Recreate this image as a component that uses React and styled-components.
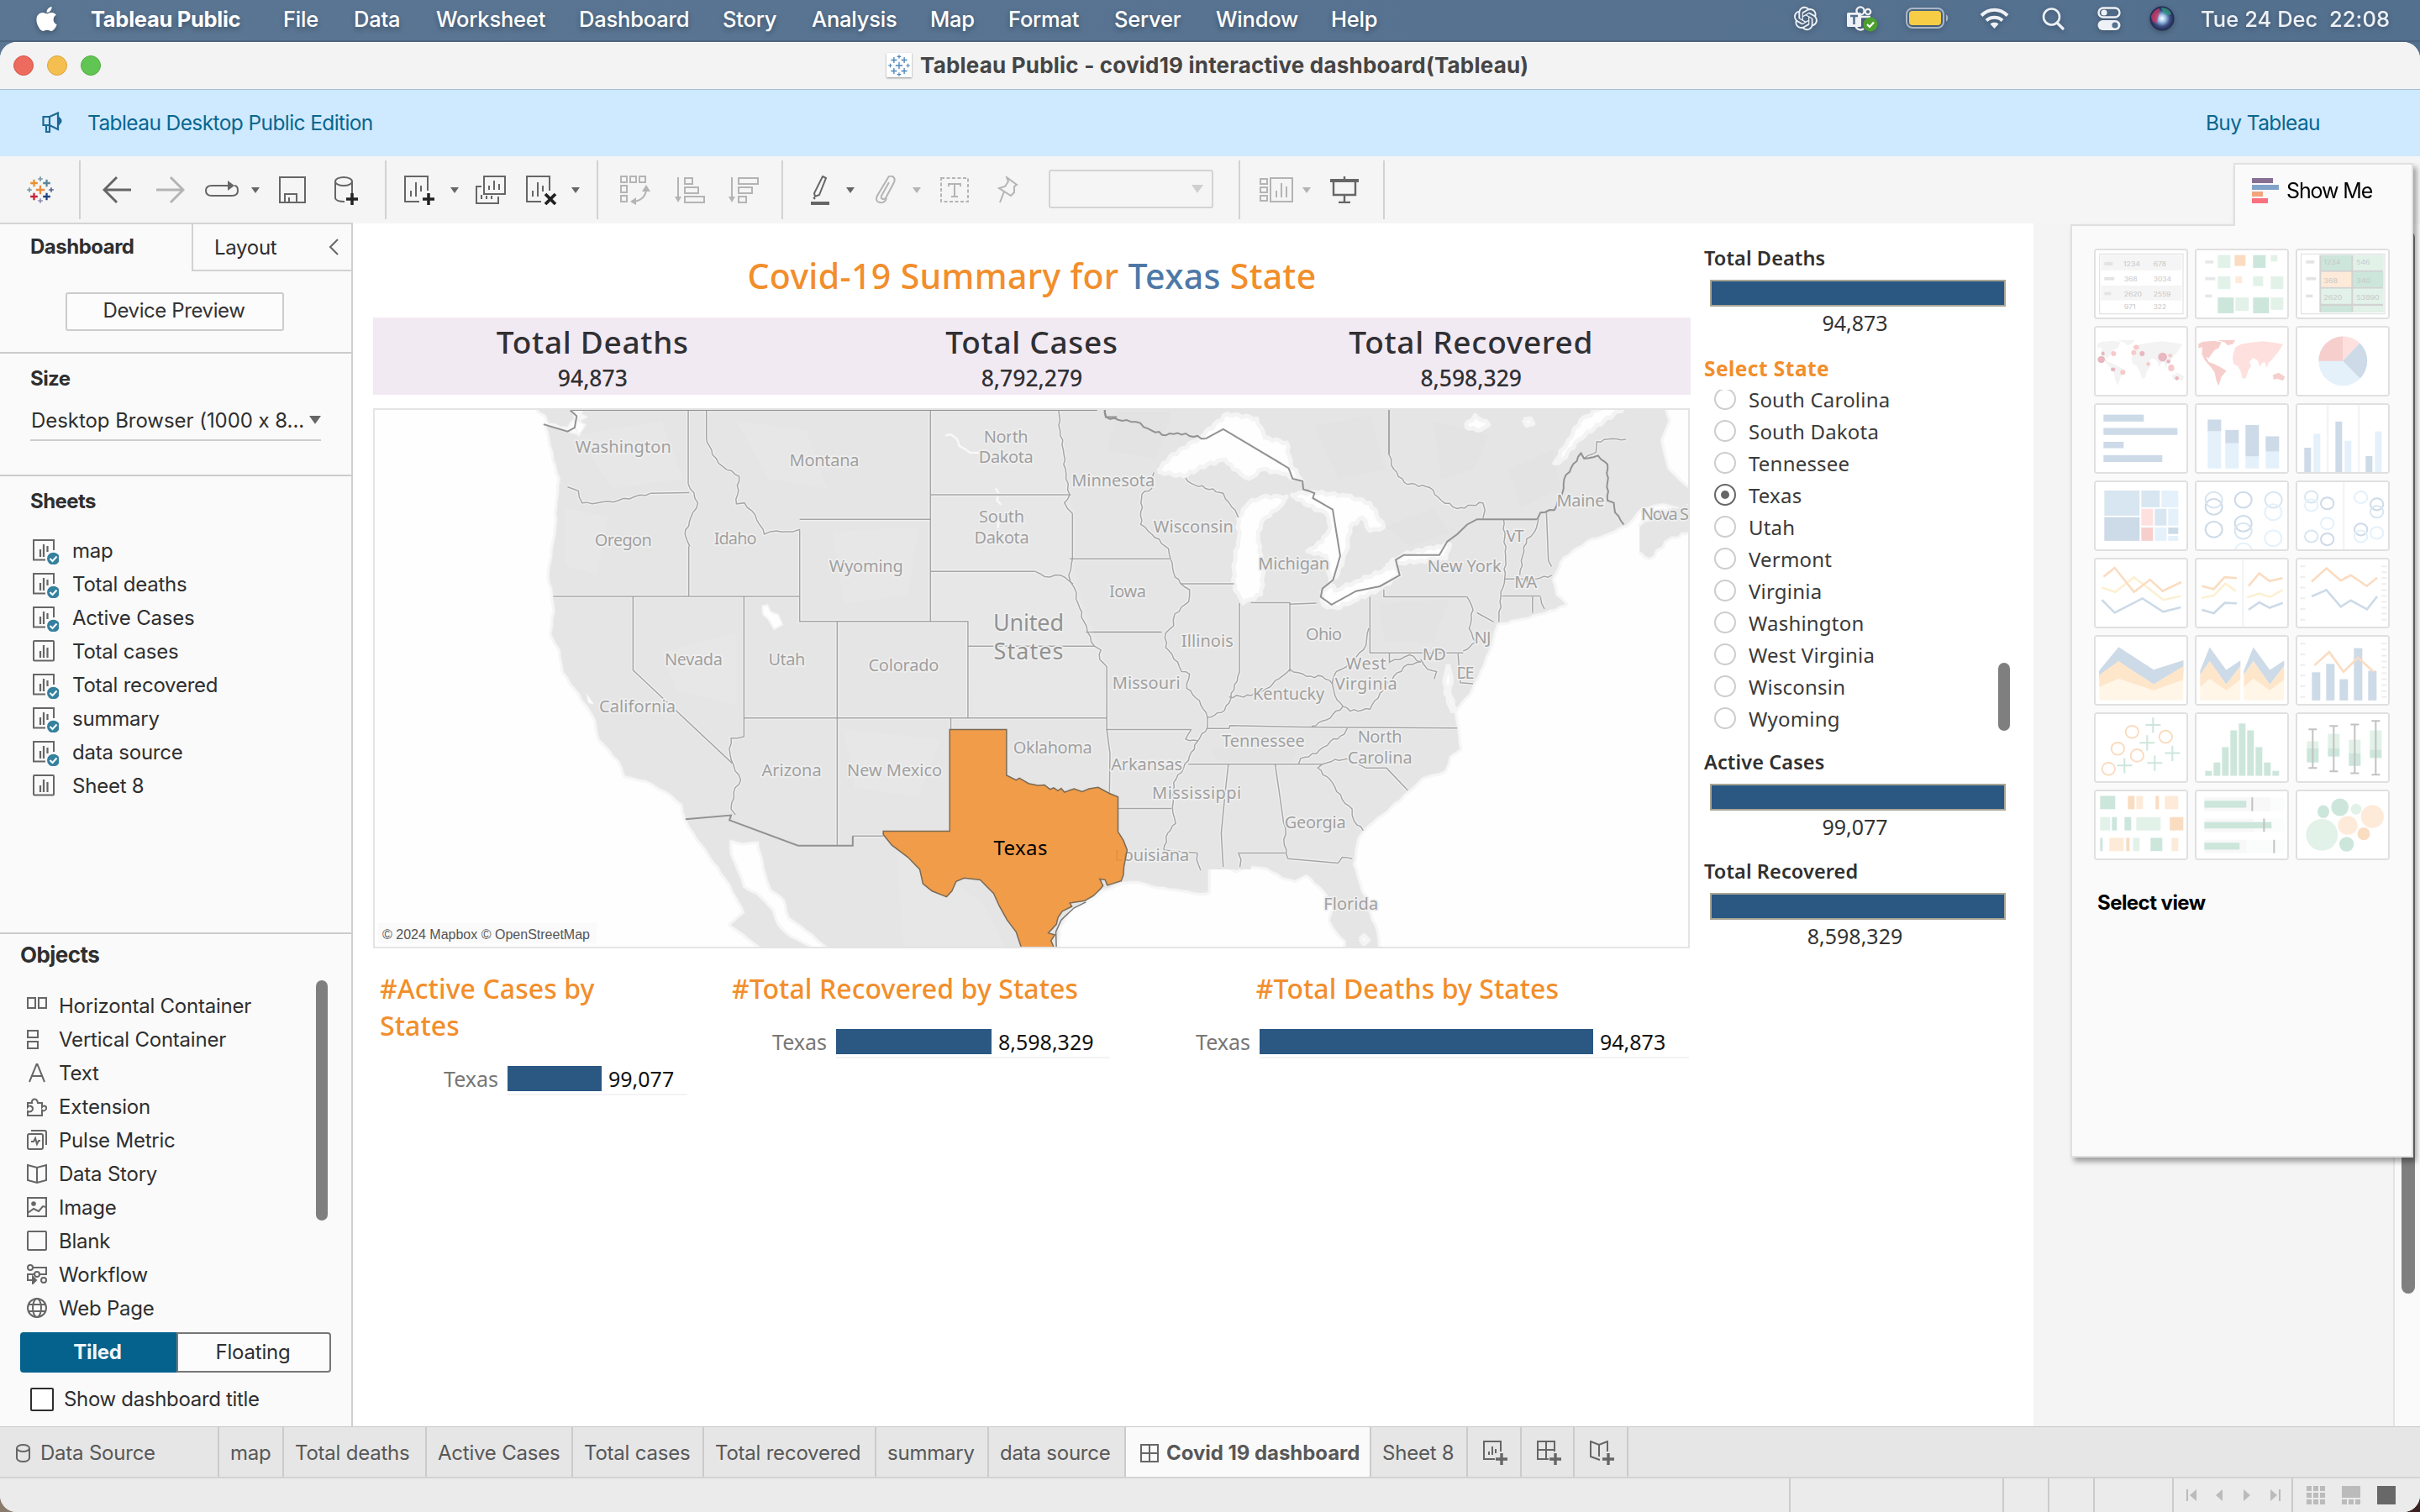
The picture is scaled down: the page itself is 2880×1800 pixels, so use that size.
import React from "react";
import styled, { createGlobalStyle, css } from "styled-components";
import { FaApple } from "react-icons/fa";
import { RiOpenaiFill } from "react-icons/ri";

const ui = `Inter, "Liberation Sans", sans-serif`;
const viz = `"Noto Sans", "Open Sans", sans-serif`;
const orange = "#f28e2b";
const navy = "#2b5783";

const Global = createGlobalStyle`
  * { box-sizing: border-box; }
  body { margin: 0; overflow: hidden; }
  svg { display: block; flex: none; }
`;

/* ---------- frame ---------- */
const Desktop = styled.div`
  width: 2880px; height: 1800px; display: flex; flex-direction: column;
  font-family: ${ui}; color: #333; white-space: nowrap;
  background: linear-gradient(90deg, #5b7693 0, #53708f 100%) 0 0 / 100% 900px no-repeat,
    linear-gradient(90deg, #8a7c6c 0, #8a7c6c 50%, #3b2222 50%);
`;
const MenuBar = styled.header`
  height: 50px; display: flex; align-items: center; justify-content: space-between;
  padding: 0 36px 4px 39px; color: #fff; border-bottom: 2px solid #4b647f;
`;
const Menus = styled.nav`display: flex; align-items: center;`;
const MenuItem = styled.span`
  width: ${(p) => p.$w}px; font-size: 25.5px; letter-spacing: ${(p) => p.$ls ?? -0.2}px;
  font-weight: ${(p) => (p.$bold ? 700 : 500)}; text-shadow: 0 3px 6px rgba(0, 0, 0, 0.3);
`;
const AppleSlot = styled.span`width: 69px; display: flex; filter: drop-shadow(0 2px 3px rgba(0, 0, 0, 0.3));`;
const Tray = styled.div`
  display: flex; align-items: center; color: #eef1f5;
  filter: drop-shadow(0 2px 3px rgba(0, 0, 0, 0.25));
`;
const TraySlot = styled.span`width: ${(p) => p.$w}px; display: flex;`;
const Clock = styled.span`font-size: 25.5px; font-weight: 500; letter-spacing: 0.05px; white-space: pre;`;

const Window = styled.div`
  height: 1750px; display: flex; flex-direction: column; overflow: hidden;
  border-radius: 20px; background: #f4f4f4; position: relative;
`;
const TitleBar = styled.div`
  height: 57px; background: #f3f3f3; border-bottom: 1.5px solid #a3bfd6; border-top: 1px solid #fff;
  display: grid; grid-template-columns: 1055px 1fr; align-items: center; padding-bottom: 2px;
`;
const Lights = styled.div`display: flex; gap: 16px; padding-left: 16px;`;
const Light = styled.i`
  width: 24px; height: 24px; border-radius: 50%; background: ${(p) => p.$c}; border: 1px solid ${(p) => p.$b};
`;
const TitleText = styled.div`
  display: flex; align-items: center; gap: 10px; font-weight: 700; font-size: 26px; color: #454545;
  letter-spacing: 0.2px;
`;
const DocIcon = styled.span`
  width: 30px; height: 29px; background: #fff; box-shadow: 0 1px 2px rgba(0, 0, 0, 0.4);
  display: grid; place-items: center;
`;
const Banner = styled.div`
  height: 79px; background: #cfe9ff; color: #06678f; display: flex; align-items: center;
  justify-content: space-between; padding: 0 119px 2px 50px; font-size: 24.5px; letter-spacing: -0.6px;
`;
const BannerLeft = styled.span`display: flex; align-items: center; gap: 29px;`;

/* ---------- toolbar ---------- */
const Toolbar = styled.div`height: 80px; background: #f5f5f5; display: flex; align-items: center;`;
const Slot = styled.span`margin-left: ${(p) => p.$ml}px; width: ${(p) => p.$w}px; display: flex; justify-content: center;`;
const Sep = styled.i`margin-left: ${(p) => p.$ml}px; width: 2px; height: 70px; background: #d2d2d2;`;
const Combo = styled.span`
  margin-left: 35px; width: 196px; height: 46px; border: 2px solid #d3d3d3; border-radius: 3px;
  display: flex; align-items: center; justify-content: flex-end; padding-right: 10px; margin-top: -2px;
`;

/* ---------- body ---------- */
const Body = styled.div`height: 1432px; display: flex;`;
const Side = styled.aside`
  width: 420px; background: #fafafa; border-right: 2px solid #d0d0d0; border-top: 2px solid #d4d4d4;
  display: flex; flex-direction: column; color: #2f2f2f; font-size: 24px; letter-spacing: -0.22px;
  margin-top: -1px; height: 1433px;
`;
const SideTabs = styled.div`height: 56px; display: grid; grid-template-columns: 228px 1fr;`;
const SideTab = styled.div`
  display: flex; align-items: center; padding: ${(p) => (p.$on ? "0 0 3px 36px" : "0 0 0 25px")};
  font-weight: ${(p) => (p.$on ? 700 : 400)}; letter-spacing: ${(p) => (p.$on ? -0.5 : -0.3)}px;
  ${(p) => !p.$on && css`border-left: 2px solid #d2d2d2; border-bottom: 2px solid #d2d2d2; justify-content: space-between; padding-right: 15px;`}
`;
const PreviewBox = styled.div`height: 98px; display: flex; padding: 25px 0 0 78px; border-bottom: 2px solid #ccc;`;
const PreviewButton = styled.button`
  width: 260px; height: 46px; border: 2px solid #ccc; border-radius: 3px; background: #fcfcfc;
  font: 400 24px ${ui}; letter-spacing: -0.4px; color: #333; padding: 0 2px 3px 0;
`;
const Heading = styled.h3`
  margin: 0; font-size: ${(p) => p.$fs || 24}px; font-weight: 700; letter-spacing: -0.55px; line-height: 30px;
`;
const SizeBox = styled.div`height: 146px; padding: 15px 0 0 36px; border-bottom: 2px solid #ccc;`;
const SizeSelect = styled.div`
  margin: 17px 0 0 0; width: 346px; height: 42px; border-bottom: 2px solid #ccc; padding: 0 0 6px 1px;
  display: flex; align-items: center; justify-content: space-between; font-size: 24px; letter-spacing: -0.05px;
`;
const SheetsBox = styled.div`height: 545px; padding: 15px 0 0 36px; border-bottom: 2px solid #ccc;`;
const SheetList = styled.div`margin-top: 23px;`;
const Row = styled.div`height: 40px; display: flex; align-items: center; gap: ${(p) => p.$gap}px;`;
const ObjectsBox = styled.div`flex: 1; padding: 10px 24px 0 24px;`;
const ObjectScroll = styled.div`display: flex; justify-content: space-between; margin-top: 15px; padding-right: 4px;`;
const ObjectList = styled.div`padding-left: 8px; margin-top: 10px;`;
const Thumb = styled.i`
  width: 14px; height: ${(p) => p.$h}px; border-radius: 7px; background: #7f7f7f; margin-top: ${(p) => p.$mt || 0}px;
`;
const Toggle = styled.div`
  margin-top: 9px; width: 370px; height: 48px; display: grid; grid-template-columns: 186px 1fr;
`;
const ToggleHalf = styled.div`
  display: grid; place-items: center; padding: 0 2px 2px 0;
  ${(p) => p.$on
    ? css`background: #05628c; color: #f0f7fb; font-weight: 700; border-radius: 4px 0 0 4px;`
    : css`background: #fcfcfc; border: 2px solid #767676; border-radius: 0 4px 4px 0;`}
`;
const CheckRow = styled.label`display: flex; align-items: center; gap: 12px; margin: 17px 0 0 12px; letter-spacing: -0.32px;`;
const Check = styled.i`width: 28px; height: 28px; border: 2px solid #2e2e2e; border-radius: 2px; background: #fff;`;

/* ---------- dashboard ---------- */
const Canvas = styled.main`
  width: 2000px; background: #fff; padding-left: 24px; display: grid; grid-template-columns: 1568px 1fr;
  column-gap: 16px; font-family: ${viz};
`;
const Title = styled.h1`
  margin: 0; height: 112px; padding-top: 12px; display: flex; align-items: center; justify-content: center;
  font-size: 41px; font-weight: 500; color: ${orange}; white-space: pre; letter-spacing: 0.35px;
  b { font-weight: 500; color: #4e79a7; }
`;
const Band = styled.section`height: 92px; background: #f2eaf3; display: grid; grid-template-columns: repeat(3, 1fr);`;
const Kpi = styled.div`text-align: center; color: #303033; font-weight: 500;`;
const KpiName = styled.div`font-size: 37px; line-height: 44px; padding-top: 7px; letter-spacing: 0.7px;`;
const KpiValue = styled.div`font-size: 26.5px; line-height: 30px; margin-top: 6px;`;
const MapFrame = styled.section`margin-top: 16px; height: 643px; width: 1567px;`;
const Charts = styled.section`display: grid; grid-template-columns: 372px 522px 674px; padding-top: 26px;`;
const ChartTitle = styled.h2`
  margin: 0 0 26px; font-size: 32px; line-height: 44px; font-weight: 500; color: ${orange};
  white-space: pre; ${(p) => (p.$left ? "padding-left: 8px;" : "text-align: center;")}
  letter-spacing: 0.08px;
`;
const ChartRow = styled.div`display: grid; grid-template-columns: ${(p) => p.$label}px 1fr; align-items: start;`;
const ChartLabel = styled.span`text-align: right; padding-right: 11px; color: #777; font-size: 25px; line-height: 31px;`;
const Plot = styled.div`
  width: ${(p) => p.$w}px; height: 35px; border-bottom: 2px solid #f3f3f3; display: flex;
  gap: 8px; color: #111; font-size: 25px; line-height: 31px;
`;
const Bar = styled.i`width: ${(p) => p.$w}px; height: 30px; background: ${navy};`;

const Panel = styled.section`padding-top: 27px; color: #333; font-size: 24px;`;
const WidgetBlock = styled.div`margin-top: ${(p) => p.$mt || 0}px; height: 107px;`;
const WidgetTitle = styled.h3`
  margin: 0; font-size: ${(p) => (p.$accent ? 24.5 : 23.5)}px; line-height: ${(p) => (p.$accent ? 30 : 28)}px;
  padding-bottom: ${(p) => (p.$accent ? 0 : 2)}px; letter-spacing: ${(p) => (p.$accent ? 0.45 : 0.1)}px;
  font-weight: ${(p) => (p.$accent ? 700 : 600)}; color: ${(p) => (p.$accent ? orange : "#303030")};
`;
const FullBar = styled.div`
  margin: 10px 0 0 7px; width: 352px; height: 32px; background: ${navy}; border: 2px solid #a9a695;
`;
const WidgetValue = styled.div`margin: 4px 0 0 7px; width: 345px; text-align: center; font-size: 25px; line-height: 30px;`;
const StateBox = styled.div`margin-top: 24px; height: 469px; display: flex; flex-direction: column;`;
const StateScroll = styled.div`margin-top: 10px; height: 421px; display: flex; justify-content: space-between; padding-right: 28px;`;
const States = styled.div`margin: -8px 0 0 12px;`;
const StateRow = styled.div`
  height: 38px; display: flex; align-items: center; gap: 15px; font-size: 24px; color: #3a3a3a; letter-spacing: 0.2px;
  &:first-child i { clip-path: inset(2px 0 0 0); }
`;
const Radio = styled.i`
  width: 26px; height: 26px; border-radius: 50%; border: 2px solid ${(p) => (p.$on ? "#666" : "#cdcdcd")};
  display: grid; place-items: center;
  ${(p) => p.$on && css`&::after { content: ""; width: 10px; height: 10px; border-radius: 50%; background: #666; }`}
`;

const Gutter = styled.div`flex: 1; background: #f4f4f4;`;
const Track = styled.div`
  width: 32px; border-left: 2px solid #e4e4e4; background: #fafafa; padding: 9px 0 0 8px;
  i { display: block; width: 16px; height: 1265px; border-radius: 8px; background: #7f7f7f; }
`;

/* ---------- show me palette, floats over the canvas ---------- */
const ShowMe = styled.div`
  position: absolute; left: 2464px; top: 144px; width: 408px; filter: drop-shadow(4px 5px 3px rgba(0, 0, 0, 0.35));
  display: flex; flex-direction: column; align-items: flex-end; color: #000;
`;
const ShowTab = styled.div`
  width: 214px; height: 75px; background: #fafafa; border: 2px solid #e0e0e0; border-bottom: 0;
  display: flex; align-items: center; gap: 9px; padding: 0 0 12px 20px; font-size: 25px; margin-bottom: -2px;
  position: relative; z-index: 1; letter-spacing: -1.1px;
`;
const ShowBody = styled.div`
  width: 408px; height: 1111px; background: #fafafa; border: 2px solid #e0e0e0; padding: 27px 26px 0;
`;
const ThumbGrid = styled.div`display: grid; grid-template-columns: repeat(3, 112px); gap: 8px;`;
const Cell = styled.div`
  height: 84px; background: #fff; border-radius: 3px; overflow: hidden; display: grid;
  svg, &::after { grid-area: 1 / 1; }
  &::after { content: ""; border: 2px solid #e0e0e0; border-radius: 3px; }
`;
const SelectView = styled.div`margin: 36px 0 0 4px; font-size: 24px; font-weight: 700; letter-spacing: -0.55px; line-height: 30px;`;

/* ---------- bottom ---------- */
const Tabs = styled.div`
  height: 62px; background: #e6e6e6; border-top: 1.5px solid #c8c8c8; border-bottom: 2px solid #d3d3d3; display: flex;
`;
const Tab = styled.div`
  width: ${(p) => p.$w}px; border-right: 2px solid #cbcbcb; display: flex; align-items: center; gap: ${(p) => p.$gap || 9}px;
  padding-left: ${(p) => p.$pl ?? 13}px; font-size: 24px; color: #585858; letter-spacing: ${(p) => (p.$on ? -0.05 : -0.22)}px;
  padding-top: 2px; ${(p) => p.$on && "background: #fafafa; font-weight: 700;"}
`;
const Status = styled.div`flex: 1; background: #ebebeb; display: flex; justify-content: flex-end;`;
const StatusCell = styled.div`
  width: ${(p) => p.$w}px; border-left: 2px solid #cbcbcb; display: flex; align-items: center;
  gap: ${(p) => p.$gap || 0}px; padding-left: ${(p) => p.$pl || 0}px;
`;

/* ---------- icon helpers ---------- */
const Ico = ({ w = 32, h = w, vb, c = "#666", sw = 2, fill = "none", children }) => (
  <svg width={w} height={h} viewBox={vb || `0 0 ${w} ${h}`} fill={fill} stroke={c} strokeWidth={sw}>{children}</svg>
);
const Caret = ({ c = "#666", w = 10 }) => (
  <svg width={w} height={w * 0.7} viewBox="0 0 10 7"><path d="M0 0h10L5 7z" fill={c} /></svg>
);
const Plus = ({ x, y, r, c, s = 2.4 }) => <path d={`M${x - r} ${y}h${2 * r}M${x} ${y - r}v${2 * r}`} stroke={c} strokeWidth={s} />;
const Logo = ({ mono, size = 32 }) => {
  const k = (c) => (mono ? "#4a84ba" : c);
  const s = mono ? 1.7 : 2.4;
  const t = mono ? 1.5 : 1.8;
  return (
    <svg width={size} height={size} viewBox="0 0 34 34">
      <Plus x={17} y={17} r={5.5} c={k("#eb8a3c")} s={s} /><Plus x={9} y={8.5} r={4.6} c={k("#e8912d")} s={s} />
      <Plus x={25} y={8.5} r={4.6} c={k("#5b879b")} s={s} /><Plus x={9} y={25.5} r={4.6} c={k("#c72037")} s={s} />
      <Plus x={25} y={25.5} r={4.6} c={k("#1f447e")} s={s} /><Plus x={17} y={3.2} r={3} c={k("#7099a6")} s={t} />
      <Plus x={17} y={30.8} r={3} c={k("#8d8eb5")} s={t} /><Plus x={3.2} y={17} r={3} c={k("#7099a6")} s={t} />
      <Plus x={30.8} y={17} r={3} c={k("#59619b")} s={t} />
    </svg>
  );
};

const SheetIcon = ({ used }) => (
  <Ico w={34} h={34}>
    {used ? <path d="M18 28.5H4V5h24v12" /> : <rect x="4" y="5" width="24" height="23.5" rx="1" />}
    <path d={used ? "M12 25v-9M16 25V10M20.5 19v-7" : "M12 25v-8M16 25V10M20.5 25V13"} strokeWidth="2.2" />
    {used ? <circle cx="27.5" cy="28" r="9" fill="#fafafa" stroke="none" /> : null}
    {used ? <ellipse cx="27.5" cy="27" rx="7.5" ry="7.3" fill="#35809f" stroke="none" /> : null}
    {used ? <path d="M23.5 27l3 3 5-5.5" stroke="#fff" /> : null}
  </Ico>
);

const objectIcons = {
  "Horizontal Container": <path d="M1 3h9v12H1zM14 3h9v12h-9z" />,
  "Vertical Container": <path d="M1 2h12v8H1zM1 15h12v8H1z" />,
  Text: <path d="M3 23L11.5 2h1L21 23M6 16h12" />,
  Extension: <path d="M1 11v-3h5c-1-5 6-7 7 0h5v5c2-3 6-1 5 2s-4 3-5 1v7H1v-5c3 1 6 0 6-3S3 10 1 13z" />,
  "Pulse Metric": <g><rect x="1" y="5" width="18" height="18" rx="2" /><path d="M5 1h16q2 0 2 2v15M5 14h3l2-4 2 7 2-4h2" /></g>,
  "Data Story": <path d="M1 2l11 3 11-3v18l-11 3-11-3zM12 5v18" />,
  Image: <g><rect x="1" y="1" width="22" height="22" /><path d="M1 19l7-5 6 3 5-6 4 1" /><circle cx="8" cy="8" r="1.8" fill="#666" /></g>,
  Blank: <rect x="1" y="1" width="22" height="22" rx="1" />,
  Workflow: <g><circle cx="4" cy="4" r="3" /><circle cx="12" cy="12" r="3" /><circle cx="20" cy="19" r="3" /><path d="M7 4h16v8h-8M9 12H1v7h6" /><path d="M7 15l4 4-4 4z" fill="#666" /></g>,
  "Web Page": <g><circle cx="12" cy="12" r="11" /><ellipse cx="12" cy="12" rx="5" ry="11" /><path d="M2 8h20M2 16h20" /></g>,
};

const Worksheet = () => <path d="M19 32H2V2h27v17M9 26v-7M15 26V9M21 20v-7" />;

/* ---------- map ---------- */
const wiggle = (pts, amp = 3, step = 9) => {
  const p = pts.trim().split(/\s+/).map((s) => s.split(",").map(Number));
  const out = [p[0]];
  for (let i = 1; i < p.length; i++) {
    const [x0, y0] = p[i - 1];
    const [x1, y1] = p[i];
    const len = Math.hypot(x1 - x0, y1 - y0);
    const n = Math.floor(len / step);
    for (let k = 1; k < n; k++) {
      const t = k / n;
      const d = Math.sin(x0 * 12.9 + y1 * 7.7 + k * 4.1) * amp;
      out.push([x0 + (x1 - x0) * t - ((y1 - y0) / len) * d, y0 + (y1 - y0) * t + ((x1 - x0) / len) * d]);
    }
    out.push([x1, y1]);
  }
  return "M" + out.map(([x, y]) => `${x.toFixed(1)} ${y.toFixed(1)}`).join("L");
};

/* The country is drawn on two sheets, each in its own units. */
const WEST = "translate(430 260) scale(0.63776 0.574)";
const EAST = "translate(1300 260) scale(0.47194 0.574)";
const westX = (x) => 430 + x * 0.63776;
const eastX = (x) => 1300 + x * 0.47194;
const mapY = (y) => 260 + y * 0.574;

const westLand = "345,428 352,455 360,500 372,540 367,585 364,640 357,700 351,740 358,780 362,815 355,862 372,895 378,940 400,975 422,1010 438,1040 445,1080 482,1125 492,1155 532,1165 568,1187 600,1215 606,1245 622,1275 650,1320 682,1370 702,1410 716,1440 690,1465 712,1482 747,1512 747,1530 836,1530 836,1512 800,1492 776,1466 766,1436 736,1402 712,1388 700,1352 688,1320 687,1288 712,1295 742,1292 752,1345 766,1392 790,1412 800,1450 832,1476 872,1512 880,1530 1297,1530 1300,1470 1325,1430 1352,1415 1382,1392 1420,1376 1450,1374 1482,1385 1522,1390 1580,1396";
const eastLand = "60,1374 130,1368 165,1385 215,1390 250,1396 288,1398 262,1375 264,1350 290,1346 340,1342 362,1352 390,1343 440,1346 480,1366 512,1372 540,1360 575,1385 597,1408 612,1430 600,1455 618,1480 640,1498 636,1530 724,1530 716,1480 692,1430 672,1380 656,1340 668,1285 695,1258 730,1235 795,1188 830,1160 888,1145 900,1115 926,1100 920,1060 912,1022 925,1008 950,985 962,962 985,925 1005,882 1012,858 1020,840 1085,828 1140,816 1192,800 1168,782 1158,748 1186,702 1245,668 1300,652 1345,636 1385,600 1440,590 1490,600 1510,585";

const westStraight = [
  "M610 397V550M611 680V784M644 397V455M818 645V836H1062V397M818 624H1062M358 784H818M540 570L612 569",
  "M1062 836H1132V1036M714 1036H1391M714 784V1075M507 784V937L692 1130M888 836V1301M1132 887H1368",
  "M917 1281H974M1100 1036V1060M1062 573H1324M1062 732H1257M1322 706H1508M1352 858H1492M1391 930V1060H1548",
  "M1391 1060L1397 1110 1396 1195M1412 1224H1512M1327 612V706",
];
const westRiver = [
  "610,550 628,590 615,620 604,655 613,680", "644,455 655,490 675,515 705,535 700,592 715,590 735,615 752,655 775,648 805,650 818,645",
  "385,557 405,565 412,590 440,590 480,585 540,570", "714,1075 690,1078 688,1110 695,1135 708,1165 695,1190 690,1225 698,1237",
  "1257,732 1275,743 1305,740 1328,758", "1301,397 1304,440 1310,480 1315,540 1322,573 1312,590 1327,612",
  "1327,706 1320,740 1330,765 1338,800 1348,835 1355,858 1368,887 1380,895 1378,915 1391,930",
];
const eastStraight = [
  "M222 758H357M371 798V930M400 797H498V940M498 800L565 798M700 785V901H935M735 770V785H945M749 901V922",
  "M290 1058H345L347 1052 530 1055 920 1057M242 1132H580M650 1123L690 1140H742L795 1186M461 1132L480 1240",
  "M343 1132L335 1190 325 1275 330 1345M487 1316H368M493 1328L620 1337M1040 748H1120M1033 783H1130M1110 785V818",
  "M1145 610L1150 710 1158 722M922 903L928 963 960 965M180 1310L265 1316M970 818L1012 837M0 858H175",
];
const eastRiver = [
  "155,527 150,560 125,572 122,635 150,655 192,685 197,706 205,735 222,757 245,770 243,795 208,820 205,845 185,860 185,890 215,920 225,940 245,945 238,975 270,1000 290,1035 290,1055 265,1085 245,1115 230,1140 205,1170 202,1220 210,1255 190,1275 180,1310",
  "250,1060 235,1080 265,1083", "235,538 250,550 330,570 345,590 360,605 368,620", "371,930 365,960 350,985 345,1005 325,1025 290,1035",
  "345,992 400,990 440,975 470,955 498,935 540,950 580,950 605,965 615,940 640,930 665,910 690,885 697,850",
  "945,785 960,812 950,850 968,880 935,897", "605,965 612,990 632,1012 650,1022 700,1018 725,985 760,950 795,925 828,920 800,905 775,915 750,920",
  "828,915 845,935 868,940 862,955", "632,1012 590,1040 553,1053", "643,1057 635,1070 600,1085 565,1110 525,1120 520,1132", "568,1140 580,1132 612,1122 650,1123",
  "568,1140 605,1170 630,1205 655,1225 660,1250 683,1270", "480,1240 487,1265 484,1300 493,1328", "368,1316 375,1330 372,1345", "620,1337 630,1325 655,1328",
  "265,1316 263,1330 273,1352", "1037,624 1042,700 1040,745 1030,785 1025,837", "1125,624 1115,650 1095,665 1085,700 1078,740",
  "1120,748 1158,740", "1130,785 1140,810", "748,490 760,520 787,548 850,558 880,585 920,602 985,590 990,605 985,622", "1240,498 1270,485 1272,463 1310,457 1345,458",
];
const lakes = [
  "165,525 195,495 270,455 340,405 415,415 435,455 490,465 500,510 530,545 480,530 430,520 395,540 355,520 335,500 290,510 230,535 165,525",
  "368,620 395,590 430,577 490,577 470,600 430,625 418,650 421,690 432,730 425,780 380,798 359,770 356,720 370,660 368,620",
  "500,572 560,568 640,575 700,590 735,640 700,648 680,620 650,640 640,690 620,735 600,755 590,700 542,690 580,670 600,640 590,612 545,596 500,572",
  "577,772 608,762 612,772 660,755 758,722 775,740 720,770 660,793 615,808 583,802 577,772",
  "740,720 785,697 870,680 902,676 892,705 830,710 780,715 740,720",
  "1290,388 1230,420 1200,460 1165,508 1185,500 1225,460 1290,420 1350,388 1290,388",
  "897,925 905,950 900,985 916,1018 908,1022 890,985 890,950 897,925",
  "940,430 965,408 1000,428 970,440 940,430", "1087,418 1105,415 1112,426 1095,430 1087,418",
  "675,1495 685,1487 697,1497 685,1505 675,1495",
];
const texas = "974,1271 1098,1271 1098,1060 1204,1060 1204,1155 1222,1165 1228,1161 1245,1172 1262,1176 1275,1175 1285,1184 1292,1181 1300,1187 1306,1182 1312,1190 1330,1183 1345,1189 1358,1183 1375,1180 1395,1192 1412,1200 1412,1272 1422,1290 1429,1310 1423,1345 1422,1362 1418,1374 1392,1383 1388,1372 1378,1370 1384,1384 1378,1392 1366,1405 1350,1415 1322,1420 1326,1427 1308,1437 1300,1450 1297,1464 1282,1482 1294,1486 1287,1498 1293,1514 1232,1514 1222,1480 1205,1455 1190,1425 1180,1400 1155,1372 1125,1368 1110,1375 1102,1395 1092,1407 1065,1395 1048,1380 1042,1350 1020,1325 990,1300 974,1278";

const labels = [
  ["Washington", westX(489), 486, 114], ["Oregon", westX(489), 680, 68], ["Idaho", westX(698), 676, 51], ["Montana", westX(864), 514, 83],
  ["Wyoming", westX(942), 733, 88], ["North", westX(1203), 465, 53], ["Dakota", westX(1203), 507, 65], ["South", westX(1195), 631, 54],
  ["Dakota", westX(1195), 674, 65], ["Minnesota", westX(1403), 556, 99], ["Iowa", westX(1430), 786, 44], ["Nevada", westX(620), 926, 69],
  ["Utah", westX(794), 926, 44], ["Colorado", westX(1012), 939, 84], ["California", westX(515), 1025, 91], ["Arizona", westX(803), 1157, 71],
  ["New Mexico", westX(995), 1157, 113], ["Oklahoma", westX(1290), 1109, 94], ["Missouri", eastX(136), 976, 81], ["Arkansas", eastX(137), 1144, 85],
  ["Wisconsin", eastX(255), 652, 95], ["Michigan", eastX(508), 728, 85], ["Illinois", eastX(290), 888, 62], ["Ohio", eastX(584), 875, 43],
  ["Kentucky", eastX(495), 998, 85], ["West", eastX(690), 935, 48], ["Virginia", eastX(690), 978, 74], ["Tennessee", eastX(431), 1096, 99],
  ["North", eastX(725), 1087, 53], ["Carolina", eastX(725), 1130, 77], ["Mississippi", eastX(263), 1203, 106], ["Georgia", eastX(562), 1265, 73],
  ["Louisiana", eastX(150), 1332, 89], ["Florida", eastX(652), 1433, 65], ["New York", eastX(938), 733, 88], ["VT", eastX(1066), 671, 21],
  ["MA", eastX(1093), 767, 27], ["NJ", eastX(984), 881, 20], ["MD", eastX(862), 916, 28], ["DE", eastX(941), 955, 21], ["Maine", eastX(1231), 598, 57],
  ["Nova S", eastX(1444), 625, 57],
];

const StateLabel = styled.text`
  font: 20px ${viz}; fill: #a0a0a0; stroke: #efefef; stroke-width: 3.5px; paint-order: stroke;
  stroke-linejoin: round; text-anchor: middle; white-space: pre;
`;
const Country = styled(StateLabel)`font-size: 27px; fill: #929292;`;
const Marker = styled.text`font: 24px ${viz}; fill: #000; text-anchor: middle;`;
const Credit = styled.text`font: 16px "Liberation Sans", sans-serif; fill: #555;`;

const MapArt = () => {
  const ns = { vectorEffect: "non-scaling-stroke" };
  return (
    <svg width="1567" height="643" viewBox="444 486 1567 643">
      <rect x="444" y="486" width="1567" height="643" fill="#fefefe" />
      {["halo", "land"].map((k) => {
        const s = k === "halo" ? { stroke: "#f6f6f6", strokeWidth: 7, strokeLinejoin: "round", fill: "#f6f6f6" } : { fill: "#e5e5e5", stroke: "#ebebeb", strokeWidth: 1 };
        return (
          <g key={k} {...s}>
            <path {...ns} transform={EAST} d={`${wiggle(eastLand, 1.6, 13)}L1510 565L1480 545L1450 520L1440 490L1432 460L1452 420L1436 380L0 380L0 1374Z`} />
            <path {...ns} transform={WEST} d={`${wiggle(westLand, 1.4, 13)}L1580 380L420 380L412 405L424 412L410 420L418 432L405 450L372 440Z`} />
            <path {...ns} transform={WEST} d={wiggle("320,380 332,400 345,408 350,424 384,432 396,415 388,380", 2)} />
            <path {...ns} transform={EAST} d={wiggle("1380,640 1430,612 1512,590 1512,645 1450,665 1405,703 1380,690", 3)} />
          </g>
        );
      })}
      <path transform={WEST} fill="#e5e5e5" d="M1480 380H1660V1350H1480Z" />
      <g transform={WEST} fill="#ebebeb" opacity="0.4">
        <path d="M1065 400L1300 400 1325 600 1335 760 1385 910 1388 1030 1140 1030 1130 840 1065 830ZM700 420L830 440 870 560 760 540ZM880 650L1040 640 1020 780 900 800ZM380 600L460 620 440 740 380 720ZM560 900L700 860 700 1010 590 980ZM900 1060L1080 1080 1040 1200 920 1180ZM1000 1300L1160 1420 1200 1510 1010 1510ZM400 450L560 420 600 540 470 560Z" />
      </g>
      <g transform={EAST} fill="#e0e0e0" opacity="0.4">
        <path d="M60 400L200 400 160 500 40 480ZM560 430L700 410 740 520 620 540ZM860 420L1000 450 960 520 880 540ZM740 640L860 600 900 650 800 680ZM720 800L900 790 860 880 740 880ZM300 1100L520 1095 500 1130 320 1130ZM1050 520L1160 480 1180 560 1080 600Z" />
      </g>
      <g fill="#fefefe" stroke="#f4f4f4" strokeWidth="5" strokeLinejoin="round">
        {lakes.map((l) => <path key={l} {...ns} transform={EAST} d={wiggle(l, 3)} />)}
        <path {...ns} transform={WEST} strokeWidth="2" d="M748 804L758 802 764 816 778 822 786 842 770 852 760 832 750 822ZM398 400l12 6-6 14 14 8-12 22-6-14z" />
        <path {...ns} transform={WEST} fill="none" stroke="#f8f8f8" strokeWidth="2.5" d="M1090 450l10-2 12 10 4 14 10 6 10 8h20M1184 560l6 12-4 12 8 10M1184 612l6 12-2 18" />
        <path {...ns} transform={WEST} strokeWidth="1" d="M420 985l8 14 6 8-10-2z" />
      </g>
      {[{ stroke: "#f0f0f0", strokeWidth: 4 }, { stroke: "#a6a6a6", strokeWidth: 1.5 }].map((s) => (
        <g key={s.stroke} fill="none" {...s}>
          {westStraight.map((d) => <path key={d} {...ns} transform={WEST} d={d} />)}
          {westRiver.map((d) => <path key={d} {...ns} transform={WEST} d={wiggle(d, 2)} />)}
          {eastStraight.map((d) => <path key={d} {...ns} transform={EAST} d={d} />)}
          {eastRiver.map((d) => <path key={d} {...ns} transform={EAST} d={wiggle(d, 2.5)} />)}
        </g>
      ))}
      <g fill="none" stroke="#929292" strokeWidth="2">
        <path {...ns} transform={WEST} d="M393 397H1373M340 427L385 442 398 434 402 410 390 398M605 1246L690 1238 687 1248 815 1301H917V1281M1387 396L1389 412H1410" />
        <path {...ns} transform={EAST} d={wiggle("32,394 35,412 75,420 110,422 150,440 185,450 215,445 285,457", 2.5)} />
        <path {...ns} transform={EAST} d="M285 457L330 437 495 518 505 540 530 545 532 562 545 565 560 570 556 580 606 604 625 700 607 750 580 768 576 785 603 801 665 773 725 763 775 740 765 708 785 698H875L895 670 920 655 945 635 970 624H1122" />
        <path {...ns} transform={EAST} d={wiggle("1122,624 1130,610 1165,605 1185,570 1190,540 1232,487 1240,498 1275,492 1299,510 1299,585 1315,590 1318,610 1340,635", 2)} />
        <path {...ns} transform={EAST} strokeWidth="1.5" d="M748 394V490" />
      </g>
      {labels.map(([t, x, y, w], i) => (
        <StateLabel key={i} x={x} y={mapY(y)} textLength={w}>{t}</StateLabel>
      ))}
      <Country x={westX(1245)} y={mapY(856)} textLength="84">United</Country>
      <Country x={westX(1245)} y={mapY(915)} textLength="83">States</Country>
      <path {...ns} transform={WEST} d={`M${texas.replace(/ /g, "L")}Z`} fill="#f28e2b" fillOpacity="0.84" stroke="#7a6a55" strokeWidth="1.5" />
      <path {...ns} transform={WEST} d="M1297 1512L1296 1480 1306 1455 1330 1430 1352 1418" fill="none" stroke="#777" strokeWidth="1.5" />
      <Marker x={westX(1230)} y={mapY(1321)} textLength="64">Texas</Marker>
      <rect x="450" y="1099" width="260" height="24" fill="#fafafa" />
      <Credit x="455" y="1118" textLength="247">© 2024 Mapbox © OpenStreetMap</Credit>
      <rect x="445" y="487" width="1565" height="641" fill="none" stroke="#e4e4e4" strokeWidth="2" />
    </svg>
  );
};

/* ---------- show me drawings ---------- */
const G1 = "#cde6dc", G2 = "#e2f2e9", O1 = "#fadcc1", O2 = "#feead8", B1 = "#cddae7", B2 = "#e4f1fb", B3 = "#d8e6f1", R1 = "#f6cfcd", R2 = "#fee0df", Y1 = "#fdf0d2";
const R = (c, list) => list.map(([x, y, w, h], i) => <rect key={c + i} x={x} y={y} width={w} height={h} fill={c} />);
const E = (c, list) => list.map(([x, y, rx, ry], i) => <ellipse key={c + i} cx={x} cy={y} rx={rx} ry={ry} fill={c} />);
const Rings = ({ c, list, rx, ry }) => list.map(([x, y], i) => (
  <ellipse key={i} cx={x} cy={y} rx={rx} ry={ry} fill="none" stroke={c} strokeWidth="2" vectorEffect="non-scaling-stroke" />
));
const L = ({ c, d, w = 2 }) => <path d={d} fill="none" stroke={c} strokeWidth={w} vectorEffect="non-scaling-stroke" />;
const Num = styled.text`font: 22px ${ui}; fill: #c6c6c6;`;
const nums = (list) => list.map(([x, y, t, w], i) => (
  <Num key={i} transform={`translate(${x} ${y}) scale(1 0.568)`} textLength={w} lengthAdjust="spacingAndGlyphs">{t}</Num>
));
const World = ({ a, b }) => (
  <g>
    <path fill={a} d="M168 391L185 387 225 385 250 388 240 400 226 404 215 412 205 420 195 418 205 428 220 431 245 438 268 446 250 458 240 476 232 466 226 450 215 440 205 434 190 424 180 412 182 398 168 400ZM235 384L300 384 290 392 272 394 262 388Z" />
    <path fill={b} d="M292 412L300 398 320 392 350 389 400 386 450 390 470 392 462 400 450 410 440 416 430 424 418 430 412 440 405 428 395 430 388 438 378 424 362 420 350 428 356 436 345 446 338 460 326 462 318 446 308 436 294 432 290 422Z" />
    <path fill={a} d="M434 454L455 450 477 458 470 466 450 462 436 464Z" />
  </g>
);
const ticks = (x, n) => Array.from({ length: n }, (_, i) => `M${x} ${843 + (i * 108) / (n - 1)}h18`).join("");
const thumbs = [
  <g>{R("#f5f5f5", [[180, 211, 288, 31], [180, 273, 288, 30]])}{R("#e3e3e3", [[192, 225, 30, 7], [192, 256, 36, 6], [192, 286, 24, 6]])}
    <L c="#e3e3e3" w={1.2} d="M175 209H473V330H175Z" />
    {nums([[260, 233, "1234", 60], [367, 233, "678", 46], [262, 264, "368", 48], [367, 264, "3034", 64], [262, 295, "2620", 64], [367, 295, "2559", 62], [262, 321, "971", 42], [367, 321, "322", 46]])}</g>,
  <g>{R("#e7e7e7", [[552, 222, 30, 6], [552, 256, 36, 6], [552, 291, 24, 6]])}{R(G2, [[597, 211, 45, 26], [786, 211, 24, 13], [597, 254, 45, 26], [723, 254, 36, 20], [786, 254, 45, 26], [660, 297, 48, 27], [786, 297, 45, 25]])}
    {R(G1, [[723, 211, 45, 26], [597, 297, 57, 32], [723, 297, 57, 32]])}{R(O1, [[657, 211, 39, 22]])}{R(O2, [[660, 254, 24, 14]])}</g>,
  <g>{R("#d2d2d2", [[960, 211, 228, 116]])}{R(G1, [[966, 211, 108, 31], [1080, 245, 108, 31], [966, 314, 108, 13]])}{R(G2, [[1080, 211, 108, 31], [966, 279, 108, 31], [1080, 279, 108, 31], [1080, 314, 108, 13]])}
    {R(O2, [[966, 245, 108, 31]])}{R("#e3e3e3", [[912, 222, 30, 6], [912, 256, 36, 6], [912, 291, 24, 6]])}<L c="#e3e3e3" w={1.2} d="M895 209H1193V330H895Z" />
    {nums([[975, 231, "1234", 60], [1092, 231, "546", 48], [975, 267, "368", 50], [1092, 267, "340", 50], [975, 301, "2620", 66], [1092, 301, "53890", 82]])}</g>,
  <g><World a="#f3f3f3" b="#f3f3f3" />{E("#e8b7bf", [[181, 423, 13, 7], [187, 411, 6, 4], [223, 443, 8, 4], [327, 411, 9, 5], [400, 418, 16, 9], [421, 427, 7, 4], [451, 461, 7, 4]])}
    {E("#f8c9c9", [[225, 411, 9, 5], [258, 449, 9, 5], [306, 398, 10, 5], [297, 409, 9, 5], [349, 432, 7, 4], [427, 415, 7, 4], [431, 440, 11, 7]])}</g>,
  <g transform="translate(360 0)"><World a={R1} b={R2} /></g>,
  <g>{E(B2, [[1044, 426, 87, 50]])}<path fill={R1} d="M1044 426H957A87 50 0 0 1 1044 376Z" /><path fill={R2} d="M1044 426V376A87 50 0 0 1 1104 390Z" /><path fill={B1} d="M1044 426L1104 390A87 50 0 0 1 1105 461Z" /></g>,
  <g>{R(B1, [[189, 535, 144, 14], [189, 562, 264, 14], [189, 590, 72, 13], [189, 617, 210, 14]])}</g>,
  <g>{R(B1, [[561, 545, 48, 24], [624, 566, 48, 27], [696, 556, 48, 64], [768, 579, 48, 31]])}{R(B2, [[561, 569, 48, 75], [624, 593, 48, 51], [696, 620, 48, 24], [768, 610, 48, 34]])}</g>,
  <g>{R(B1, [[906, 602, 24, 52], [1017, 549, 24, 105], [1125, 619, 24, 35]])}{R(B2, [[939, 574, 24, 80], [1050, 588, 24, 66], [1158, 569, 24, 85]])}{R("#f2f2f2", [[987, 512, 6, 142], [1098, 512, 6, 142]])}</g>,
  <g>{R(B3, [[192, 689, 126, 51], [324, 689, 66, 34], [372, 726, 42, 34]])}{R(B1, [[192, 743, 126, 48], [420, 764, 36, 13]])}{R(B2, [[396, 689, 60, 34], [420, 726, 36, 34], [372, 764, 42, 27], [420, 781, 36, 10]])}{R(R2, [[324, 726, 42, 34]])}{R(R1, [[324, 764, 42, 27]])}</g>,
  <g><Rings c={B1} rx={30} ry={16} list={[[583, 722], [688, 708], [583, 768], [688, 756]]} /><Rings c={B3} rx={30} ry={16} list={[[583, 708], [796, 708], [688, 771]]} /><Rings c={B2} rx={30} ry={16} list={[[795, 733], [795, 786], [689, 812]]} /></g>,
  <g><Rings c={B1} rx={23} ry={12} list={[[988, 715], [988, 788], [1165, 717], [1108, 768]]} /><Rings c={B3} rx={23} ry={12} list={[[931, 702], [931, 782], [1165, 732]]} /><Rings c={B2} rx={23} ry={12} list={[[931, 719], [988, 756], [1108, 703], [1165, 775], [1108, 782]]} />{R("#f2f2f2", [[1044, 669, 6, 141]])}</g>,
  <g><L c={Y1} w={2.6} d="M183 886L231 895 298 865 403 911 465 903" /><L c={O1} w={2.6} d="M189 864L229 846 298 895 355 870 400 893 467 875" /><L c={B1} w={2.6} d="M183 911L229 937 328 908 402 935 465 926" /></g>,
  <g><L c={O1} w={2.6} d="M540 883L583 889 621 865 665 867M707 883L745 857 782 873 828 867" /><L c={Y1} w={2.6} d="M540 907L583 902 624 878 662 893M702 906L745 898 783 905 829 891" /><L c={B1} w={2.6} d="M540 931L583 938 622 917 665 918M707 931L745 916 782 927 829 917" />{R("#f2f2f2", [[684, 826, 6, 141]])}</g>,
  <g><L c="#ededed" d={ticks(891, 6) + ticks(1182, 10)} /><L c={O1} w={2.6} d="M932 874L985 847 1036 872 1072 861 1129 883 1166 866" /><L c={B1} w={2.6} d="M932 904L985 891 1036 925 1072 912 1130 930 1166 904" /></g>,
  <g><path fill={B1} d="M174 1055L243 1007 368 1053 474 1034V1060L174 1070Z" /><path fill="#fff6e8" d="M174 1088L243 1071 368 1095 474 1073V1115H174Z" /><path fill="#fee6cb" d="M174 1063L243 1035 368 1082 474 1045V1073L368 1095 243 1071 174 1088Z" /><path fill={B1} d="M174 1055L243 1007 368 1053 474 1034V1045L368 1082 243 1035 174 1063Z" /></g>,
  <g>{[0, 156].map((x) => <g key={x} transform={`translate(${x} 0)`}><path fill="#fff6e8" d="M534 1088L568 1071 627 1095 678 1073V1115H534Z" /><path fill="#fee6cb" d="M534 1063L568 1035 627 1082 678 1045V1073L627 1095 568 1071 534 1088Z" /><path fill={B1} d="M534 1055L568 1007 627 1053 678 1034V1045L627 1082 568 1035 534 1063Z" /></g>)}</g>,
  <g><g transform="translate(0 157)"><L c="#ededed" d={ticks(891, 6) + ticks(1182, 10)} /></g>{R(B1, [[933, 1058, 30, 57], [984, 1041, 30, 74], [1032, 1072, 30, 43], [1083, 1009, 30, 106], [1134, 1055, 30, 60]])}<L c={O1} w={2.6} d="M942 1044L995 1017 1046 1057 1098 1028 1153 1057" /></g>,
  <g><Rings c={O1} rx={23} ry={12.5} list={[[291, 1179], [411, 1189], [240, 1213], [309, 1227], [207, 1254]]} /><L c={G1} d="M339 1165h54M366 1150v31M318 1201h54M345 1186v31M408 1222h54M435 1207v31M345 1242h54M372 1227v31M237 1247h54M264 1232v31" /></g>,
  <g>{R(G1, [[552, 1258, 24, 10], [582, 1241, 24, 27], [612, 1210, 24, 58], [642, 1176, 24, 92], [672, 1162, 24, 106], [702, 1176, 24, 92], [732, 1210, 24, 58], [762, 1241, 24, 27], [792, 1258, 24, 10]])}</g>,
  <g>{R(G2, [[915, 1198, 42, 14], [990, 1183, 42, 29], [1065, 1195, 42, 27], [1140, 1176, 42, 39]])}{R(G1, [[915, 1212, 42, 29], [990, 1212, 42, 17], [1065, 1222, 42, 26], [1140, 1215, 42, 17]])}<L c="#c2c2c2" d="M936 1174V1252M921 1174h30M921 1252h30M1011 1167V1259M996 1167h30M996 1259h30M1086 1164V1263M1071 1164h30M1071 1263h30M1161 1157V1266M1146 1157h30M1146 1266h30" /></g>,
  <g>{R(G1, [[177, 1309, 54, 27], [219, 1352, 18, 27], [264, 1352, 24, 27], [177, 1394, 9, 27], [357, 1394, 42, 27]])}{R(O1, [[276, 1309, 24, 27], [375, 1309, 12, 27], [426, 1352, 48, 27], [270, 1394, 12, 27]])}{R(O2, [[306, 1309, 24, 27], [408, 1309, 48, 27], [210, 1394, 51, 27], [432, 1394, 24, 27]])}{R(G2, [[177, 1352, 36, 27], [306, 1352, 87, 27], [294, 1394, 24, 27]])}</g>,
  <g>{R("#fbfdfc", [[549, 1312, 285, 28], [549, 1355, 285, 27], [549, 1398, 285, 27]])}{R("#f8f8f8", [[549, 1312, 237, 28], [549, 1355, 174, 27], [549, 1398, 150, 27]])}{R(G1, [[549, 1319, 150, 14], [549, 1362, 240, 13], [549, 1404, 126, 14]])}{R("#c2c2c2", [[717, 1312, 6, 28], [759, 1355, 6, 27], [795, 1398, 6, 27]])}</g>,
  <g>{E(G2, [[969, 1388, 57, 32], [1091, 1336, 19, 11]])}{E(G1, [[974, 1341, 21, 13], [1033, 1332, 31, 18], [1057, 1407, 26, 15]])}{E(O2, [[1149, 1351, 41, 23], [1061, 1369, 35, 19]])}{E(O1, [[1118, 1386, 22, 13]])}</g>,
];

/* ---------- data ---------- */
const menus = [["File", 84], ["Data", 98], ["Worksheet", 170], ["Dashboard", 171], ["Story", 106], ["Analysis", 141], ["Map", 93], ["Format", 126], ["Server", 121], ["Window", 137], ["Help", 60]];
const sheets = [["map", 1], ["Total deaths", 1], ["Active Cases", 1], ["Total cases", 0], ["Total recovered", 1], ["summary", 1], ["data source", 1], ["Sheet 8", 0]];
const states = ["South Carolina", "South Dakota", "Tennessee", "Texas", "Utah", "Vermont", "Virginia", "Washington", "West Virginia", "Wisconsin", "Wyoming"];
const tabs = [["map", 77], ["Total deaths", 170], ["Active Cases", 174], ["Total cases", 156], ["Total recovered", 205], ["summary", 134], ["data source", 163]];

const Widget = ({ title, value, mt }) => (
  <WidgetBlock $mt={mt}>
    <WidgetTitle>{title}</WidgetTitle>
    <FullBar />
    <WidgetValue>{value}</WidgetValue>
  </WidgetBlock>
);
const Chart = ({ title, left, label, plot, bar, value }) => (
  <div>
    <ChartTitle $left={left}>{title}</ChartTitle>
    <ChartRow $label={label}>
      <ChartLabel>Texas</ChartLabel>
      <Plot $w={plot}><Bar $w={bar} />{value}</Plot>
    </ChartRow>
  </div>
);

export default function App() {
  const dim = "#b4b4b4";
  return (
    <Desktop>
      <Global />
      <MenuBar>
        <Menus>
          <AppleSlot><FaApple size={33} /></AppleSlot>
          <MenuItem $bold $w={229} $ls={-0.3}>Tableau Public</MenuItem>
          {menus.map(([t, w]) => <MenuItem key={t} $w={w}>{t}</MenuItem>)}
        </Menus>
        <Tray>
          <TraySlot $w={66}><RiOpenaiFill size={34} /></TraySlot>
          <TraySlot $w={70}>
            <svg width="37" height="32" viewBox="0 0 37 32">
              <circle cx="16" cy="7" r="4.6" fill="none" stroke="currentColor" strokeWidth="2.4" /><circle cx="25" cy="8" r="3.2" fill="none" stroke="currentColor" strokeWidth="2.2" />
              <path d="M17 14h11M10 24c2 7 8 6 10 4" fill="none" stroke="currentColor" strokeWidth="2.4" /><rect x="0" y="9" width="17" height="17" rx="1.5" fill="currentColor" />
              <path d="M4 13h9M8.5 13v10" stroke="#52708f" strokeWidth="2.6" /><circle cx="28" cy="23" r="8.5" fill="#4d9f2f" /><path d="M24 23l3 3 5-5.5" fill="none" stroke="#fff" strokeWidth="2.2" />
            </svg>
          </TraySlot>
          <TraySlot $w={88}>
            <svg width="52" height="26" viewBox="0 0 52 26"><rect x="1" y="1" width="44" height="23" rx="7" fill="none" stroke="#a9b7c7" strokeWidth="2" /><rect x="4" y="4" width="38" height="17" rx="4" fill="#f8cd46" /><path d="M48 8.5c3 1 3 7 0 8z" fill="#a9b7c7" /></svg>
          </TraySlot>
          <TraySlot $w={74}>
            <svg width="35" height="26" viewBox="0 0 35 26" fill="none" stroke="currentColor" strokeWidth="4"><path d="M2 9.5C11 .5 24 .5 33 9.5M8 15.5c5-5 14-5 19 0" /><path d="M17.5 25l-5-5.5c2-2.500 8-2.500 10 0z" fill="currentColor" stroke="none" /></svg>
          </TraySlot>
          <TraySlot $w={66}>
            <svg width="28" height="28" viewBox="0 0 28 28" fill="none" stroke="currentColor" strokeWidth="2.6"><circle cx="11.5" cy="12" r="9.5" /><path d="M18 19l7 7" strokeWidth="3.2" strokeLinecap="round" /></svg>
          </TraySlot>
          <TraySlot $w={62}>
            <svg width="28" height="28" viewBox="0 0 28 28"><rect x="1.5" y="1.5" width="25" height="11" rx="5.5" fill="none" stroke="currentColor" strokeWidth="2.4" /><circle cx="8" cy="7" r="3.6" fill="currentColor" /><rect x="0.5" y="16" width="27" height="12" rx="6" fill="currentColor" /><circle cx="21" cy="22" r="3.6" fill="#52708f" /></svg>
          </TraySlot>
          <TraySlot $w={61}>
            <svg width="30" height="30" viewBox="0 0 30 30">
              <defs><radialGradient id="siri"><stop offset="0" stopColor="#fff" /><stop offset=".3" stopColor="#9fc3e8" /><stop offset=".65" stopColor="#3c4f86" /><stop offset="1" stopColor="#1f2748" /></radialGradient></defs>
              <circle cx="15" cy="15" r="14.5" fill="url(#siri)" /><path d="M2 12q4-8 10-9 0 8-4 18-6-2-6-9z" fill="#cf3560" opacity=".75" /><path d="M14 2q10 0 12 8-8 4-12-8z" fill="#2fa37f" opacity=".7" />
            </svg>
          </TraySlot>
          <Clock>{"Tue 24 Dec  22:08"}</Clock>
        </Tray>
      </MenuBar>

      <Window>
        <TitleBar>
          <Lights><Light $c="#ed6a5e" $b="#d85548" /><Light $c="#f5bf4f" $b="#dca43c" /><Light $c="#61c554" $b="#52ac42" /></Lights>
          <TitleText><DocIcon><Logo mono size={26} /></DocIcon>Tableau Public - covid19 interactive dashboard(Tableau)</TitleText>
        </TitleBar>
        <Banner>
          <BannerLeft>
            <Ico w={25} h={25} c="#1c6a94" sw={2.2}><path d="M9 6H1.5v10H9l10 5V1.5zM9 6v10M5 16v8h4v-7" /><path d="M20 7q5 4 0 8z" fill="#1c6a94" /></Ico>
            Tableau Desktop Public Edition
          </BannerLeft>
          <span>Buy Tableau</span>
        </Banner>

        <Toolbar>
          <Slot $ml={31} $w={34}><Logo /></Slot>
          <Sep $ml={29} />
          <Slot $ml={26} $w={34}><Ico w={34} h={34} sw={3}><path d="M17 2L2 17l15 15M2 17h32" /></Ico></Slot>
          <Slot $ml={30} $w={34}><Ico w={34} h={34} sw={3} c={dim}><path d="M17 2l15 15-15 15M32 17H0" /></Ico></Slot>
          <Slot $ml={24} $w={40}><Ico w={40} h={24}><path d="M30 7H8q-7 0-7 6t7 6h24q7 0 7-6t-4-6" /><path d="M27 1l8 6-8 6z" fill="#666" stroke="none" /></Ico></Slot>
          <Slot $ml={15} $w={10}><Caret /></Slot>
          <Slot $ml={22} $w={34}><Ico w={34} h={34}><path d="M2 2h30v30H2zM8 32V22h14v10M13 32v-6" /></Ico></Slot>
          <Slot $ml={33} $w={30}><Ico w={30} h={36}><ellipse cx="11" cy="8" rx="10" ry="5" /><path d="M1 8v20q1 4 11 4M21 8v14" /><path d="M21 22v14M14 29h14" stroke="#222" strokeWidth="3.5" /></Ico></Slot>
          <Sep $ml={30} />
          <Slot $ml={20} $w={38}><Ico w={38} h={36}><Worksheet /><path d="M30 22v14M23 29h14" stroke="#222" strokeWidth="3.5" /></Ico></Slot>
          <Slot $ml={18} $w={10}><Caret /></Slot>
          <Slot $ml={20} $w={36}><Ico w={36} h={36}><path d="M10 2h25v21H10zM16 18v-5M22 18V7M28 18v-7M7 14H1v20h26v-8M7 29v-5M13 29v-4M19 29v-4" /></Ico></Slot>
          <Slot $ml={23} $w={38}><Ico w={38} h={36}><Worksheet /><path d="M24 23l12 12M36 23L24 35" stroke="#222" strokeWidth="3.8" /></Ico></Slot>
          <Slot $ml={17} $w={10}><Caret /></Slot>
          <Sep $ml={20} />
          <Slot $ml={26} $w={36}><Ico w={36} h={36} c={dim}><path d="M1 2h7v7H1zM12 2h7v7h-7zM23 2h7v7h-7zM1 13h7v8H1zM1 25h7v7H1zM31 16q0 14-15 16" /><path d="M31 12l-5 8h10zM12 32l7-5v9z" fill={dim} stroke="none" /></Ico></Slot>
          <Slot $ml={29} $w={36}><Ico w={36} h={32} c={dim}><path d="M4 1v26M12 2h9v7h-9zM12 13h16v7H12zM12 24h23v7H12z" /><path d="M0 24h8l-4 7z" fill={dim} stroke="none" /></Ico></Slot>
          <Slot $ml={28} $w={36}><Ico w={36} h={32} c={dim}><path d="M4 1v26M12 2h23v7H12zM12 13h16v7H12zM12 24h9v7h-9z" /><path d="M0 24h8l-4 7z" fill={dim} stroke="none" /></Ico></Slot>
          <Sep $ml={27} />
          <Slot $ml={32} $w={24}><Ico w={24} h={36}><path d="M15 2l4 2-8 20-5 2-1-4zM4 27l2 2" /><path d="M1 34h22" strokeWidth="4" /></Ico></Slot>
          <Slot $ml={19} $w={10}><Caret /></Slot>
          <Slot $ml={24} $w={26}><Ico w={26} h={34} c={dim}><path d="M17 8L8 24q-1 4 2 4t4-3l9-17q2-5-2-7t-6 3L3 24q-3 7 3 8t8-5" /></Ico></Slot>
          <Slot $ml={19} $w={10}><Caret c={dim} /></Slot>
          <Slot $ml={23} $w={34}><Ico w={34} h={30} c={dim}><rect x="1" y="1" width="32" height="28" strokeDasharray="4 2.5" /><path d="M10 11V8h14v3M17 8v15M13 23h8" /></Ico></Slot>
          <Slot $ml={32} $w={28}><Ico w={28} h={32} c={dim}><path d="M13 1l12 9-3 2 0 7-4 4L4 14l7-2 4-6zM10 18L5 31" /></Ico></Slot>
          <Combo><Caret c="#cfcfcf" w={14} /></Combo>
          <Sep $ml={30} />
          <Slot $ml={23} $w={40}><Ico w={40} h={30} c={dim}><path d="M1 2h8v6H1zM1 12h8v6H1zM1 22h8v6H1zM13 1h26v28H13zM20 24v-8M26 24V7M32 24V11" /></Ico></Slot>
          <Slot $ml={11} $w={10}><Caret c={dim} /></Slot>
          <Slot $ml={23} $w={34}><Ico w={34} h={32}><path d="M4 4v18h26V4M17 0v4M17 22v9M10 31h14" strokeWidth="2.4" /><path d="M0 5h34" strokeWidth="4" /></Ico></Slot>
          <Sep $ml={29} />
        </Toolbar>

        <Body>
          <Side>
            <SideTabs>
              <SideTab $on>Dashboard</SideTab>
              <SideTab>Layout<Ico w={12} h={20}><path d="M11 1L2 10l9 9" /></Ico></SideTab>
            </SideTabs>
            <PreviewBox><PreviewButton>Device Preview</PreviewButton></PreviewBox>
            <SizeBox>
              <Heading>Size</Heading>
              <SizeSelect>Desktop Browser (1000 x 8...<Caret w={14} /></SizeSelect>
            </SizeBox>
            <SheetsBox>
              <Heading>Sheets</Heading>
              <SheetList>
                {sheets.map(([t, u]) => <Row key={t} $gap={16}><SheetIcon used={u} />{t}</Row>)}
              </SheetList>
            </SheetsBox>
            <ObjectsBox>
              <Heading $fs={26}>Objects</Heading>
              <ObjectScroll>
                <ObjectList>
                  {Object.entries(objectIcons).map(([t, d]) => <Row key={t} $gap={14}><Ico w={24}>{d}</Ico>{t}</Row>)}
                </ObjectList>
                <Thumb $h={286} />
              </ObjectScroll>
              <Toggle><ToggleHalf $on>Tiled</ToggleHalf><ToggleHalf>Floating</ToggleHalf></Toggle>
              <CheckRow><Check />Show dashboard title</CheckRow>
            </ObjectsBox>
          </Side>

          <Canvas>
            <div>
              <Title>{"Covid-19 Summary for "}<b>Texas</b>{" State"}</Title>
              <Band>
                <Kpi><KpiName>Total Deaths</KpiName><KpiValue>94,873</KpiValue></Kpi>
                <Kpi><KpiName>Total Cases</KpiName><KpiValue>8,792,279</KpiValue></Kpi>
                <Kpi><KpiName>Total Recovered</KpiName><KpiValue>8,598,329</KpiValue></Kpi>
              </Band>
              <MapFrame><MapArt /></MapFrame>
              <Charts>
                <Chart left title={"#Active Cases by\nStates"} label={160} plot={214} bar={112} value="99,077" />
                <Chart title="#Total Recovered by States" label={179} plot={326} bar={185} value="8,598,329" />
                <Chart title="#Total Deaths by States" label={161} plot={511} bar={397} value="94,873" />
              </Charts>
            </div>
            <Panel>
              <Widget title="Total Deaths" value="94,873" />
              <StateBox>
                <WidgetTitle $accent>Select State</WidgetTitle>
                <StateScroll>
                  <States>
                    {states.map((s) => <StateRow key={s}><Radio $on={s === "Texas"} />{s}</StateRow>)}
                  </States>
                  <Thumb $h={81} $mt={325} />
                </StateScroll>
              </StateBox>
              <Widget title="Active Cases" value="99,077" />
              <Widget mt={23} title="Total Recovered" value="8,598,329" />
            </Panel>
          </Canvas>
          <Gutter />
          <Track><i /></Track>
        </Body>

        <Tabs>
          <Tab $w={261} $pl={19} $gap={12}><Ico w={17} h={24}><ellipse cx="8.5" cy="6" rx="7.5" ry="4" /><path d="M1 6v12q1 4 7.5 4T16 18V6" /></Ico>Data Source</Tab>
          {tabs.map(([t, w]) => <Tab key={t} $w={w}>{t}</Tab>)}
          <Tab $on $w={292} $pl={17} $gap={9}><Ico w={22} h={22}><path d="M1 1h20v20H1zM11 1v20M1 11h20" /></Ico>Covid 19 dashboard</Tab>
          <Tab $w={115}>Sheet 8</Tab>
          <Tab $w={64} $pl={18}><Ico w={30} h={30}><path d="M14 22H1V1h20v12M7 17v-4M11 17V7M15 15v-5" /><path d="M22 15v14M15 22h14" strokeWidth="3.4" /></Ico></Tab>
          <Tab $w={63} $pl={18}><Ico w={30} h={30}><path d="M14 22H1V1h20v12M11 1v20M1 11h20" /><path d="M22 15v14M15 22h14" strokeWidth="3.4" /></Ico></Tab>
          <Tab $w={64} $pl={18}><Ico w={30} h={30}><path d="M12 23L1 19V1l10 4 10-4v12M11 5v14" /><path d="M22 15v14M15 22h14" strokeWidth="3.4" /></Ico></Tab>
        </Tabs>
        <Status>
          <StatusCell $w={254} /><StatusCell $w={54} /><StatusCell $w={54} /><StatusCell $w={94} />
          <StatusCell $w={142} $pl={15} $gap={20}>
            <Ico w={13} h={14} fill="#bbb" c="none"><path d="M0 0h2v14H0zM12 0v14L4 7z" /></Ico>
            <Ico w={13} h={14} fill="#bbb" c="none"><path d="M10 0v14L2 7z" /></Ico>
            <Ico w={13} h={14} fill="#bbb" c="none"><path d="M2 0v14l8-7z" /></Ico>
            <Ico w={13} h={14} fill="#bbb" c="none"><path d="M11 0h2v14h-2zM1 0v14l8-7z" /></Ico>
          </StatusCell>
          <StatusCell $w={153} $pl={16} $gap={20}>
            <Ico w={22} h={22} fill="#bbb" c="none">{[0, 8, 16].map((y) => <path key={y} d={`M0 ${y}h6v6H0zM8 ${y}h6v6H8zM16 ${y}h6v6h-6z`} />)}</Ico>
            <Ico w={22} h={22} fill="#bbb" c="none"><path d="M0 0h22v14H0zM0 16h6v6H0zM8 16h6v6H8zM16 16h6v6h-6z" /></Ico>
            <Ico w={22} h={22} fill="#686868" c="none"><path d="M0 0h22v22H0z" /></Ico>
          </StatusCell>
        </Status>

        <ShowMe>
          <ShowTab>
            <svg width="32" height="30"><rect width="25" height="6" fill="#876f94" /><rect y="8" width="32" height="6" fill="#82a3c9" /><rect y="16" width="13" height="6" fill="#f1a47e" /><rect y="24" width="19" height="6" fill="#f9707f" /></svg>
            Show Me
          </ShowTab>
          <ShowBody>
            <ThumbGrid>
              {thumbs.map((art, i) => (
                <Cell key={i}>
                  <svg width="112" height="84" viewBox={`${155 + 360 * (i % 3)} ${198 + 156.9 * Math.floor(i / 3)} 336 143`} preserveAspectRatio="none">{art}</svg>
                </Cell>
              ))}
            </ThumbGrid>
            <SelectView>Select view</SelectView>
          </ShowBody>
        </ShowMe>
      </Window>
    </Desktop>
  );
}
